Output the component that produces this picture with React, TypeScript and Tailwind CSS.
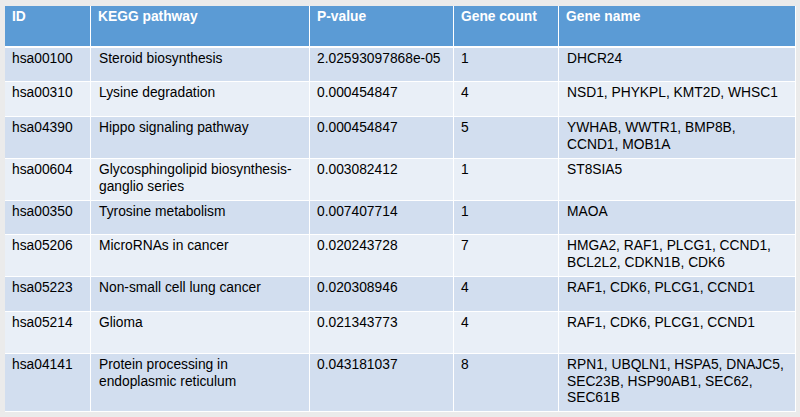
import React from 'react';

type Row = {
  id: string;
  pathway: string[];
  pvalue: string;
  count: string;
  genes: string[];
  h: string;
  bg: string;
};

const odd = 'bg-[#d2deef]';
const even = 'bg-[#e9eff7]';

const rows: Row[] = [
  { id: 'hsa00100', pathway: ['Steroid biosynthesis'], pvalue: '2.02593097868e-05', count: '1', genes: ['DHCR24'], h: 'h-[33px]', bg: odd },
  { id: 'hsa00310', pathway: ['Lysine degradation'], pvalue: '0.000454847', count: '4', genes: ['NSD1, PHYKPL, KMT2D, WHSC1'], h: 'h-[34px]', bg: even },
  { id: 'hsa04390', pathway: ['Hippo signaling pathway'], pvalue: '0.000454847', count: '5', genes: ['YWHAB, WWTR1, BMP8B,', 'CCND1, MOB1A'], h: 'h-[41px]', bg: odd },
  { id: 'hsa00604', pathway: ['Glycosphingolipid biosynthesis-', 'ganglio series'], pvalue: '0.003082412', count: '1', genes: ['ST8SIA5'], h: 'h-[41px]', bg: even },
  { id: 'hsa00350', pathway: ['Tyrosine metabolism'], pvalue: '0.007407714', count: '1', genes: ['MAOA'], h: 'h-[33px]', bg: odd },
  { id: 'hsa05206', pathway: ['MicroRNAs in cancer'], pvalue: '0.020243728', count: '7', genes: ['HMGA2, RAF1, PLCG1, CCND1,', 'BCL2L2, CDKN1B, CDK6'], h: 'h-[41px]', bg: even },
  { id: 'hsa05223', pathway: ['Non-small cell lung cancer'], pvalue: '0.020308946', count: '4', genes: ['RAF1, CDK6, PLCG1, CCND1'], h: 'h-[34px]', bg: odd },
  { id: 'hsa05214', pathway: ['Glioma'], pvalue: '0.021343773', count: '4', genes: ['RAF1, CDK6, PLCG1, CCND1'], h: 'h-[41px]', bg: even },
  { id: 'hsa04141', pathway: ['Protein processing in', 'endoplasmic reticulum'], pvalue: '0.043181037', count: '8', genes: ['RPN1, UBQLN1, HSPA5, DNAJC5,', 'SEC23B, HSP90AB1, SEC62,', 'SEC61B'], h: 'h-[57px]', bg: odd },
];

const cols = 'grid grid-cols-[85px_218px_143px_104px_236px] gap-x-px';

const Lines = ({ lines }: { lines: string[] }) => (
  <>
    {lines.map((l, i) => (
      <div key={i} className="whitespace-nowrap">{l}</div>
    ))}
  </>
);

export default function App() {
  return (
    <div className="w-[800px] h-[417px] bg-[#ebebeb] pl-[5px] pt-[6px] font-['Liberation_Sans',Arial,sans-serif] text-[13.8px] leading-[16.5px]">
      <div className="w-[791px] bg-white pr-px pb-px">
        <div className={`${cols} h-[40px] text-white font-bold mb-[2px]`}>
          {['ID', 'KEGG pathway', 'P-value', 'Gene count', 'Gene name'].map((t) => (
            <div key={t} className="bg-[#5b9bd5] pl-[7px] pt-[3px]">{t}</div>
          ))}
        </div>
        <div className="flex flex-col gap-y-px text-black">
          {rows.map((r) => (
            <div key={r.id} className={`${cols} ${r.h}`}>
              <div className={`${r.bg} pl-[7px] pt-[3px]`}>{r.id}</div>
              <div className={`${r.bg} pl-[8px] pt-[3px]`}><Lines lines={r.pathway} /></div>
              <div className={`${r.bg} pl-[7px] pt-[3px]`}>{r.pvalue}</div>
              <div className={`${r.bg} pl-[7px] pt-[3px]`}>{r.count}</div>
              <div className={`${r.bg} pl-[8px] pt-[3px]`}><Lines lines={r.genes} /></div>
            </div>
          ))}
        </div>
      </div>
    </div>
  );
}
